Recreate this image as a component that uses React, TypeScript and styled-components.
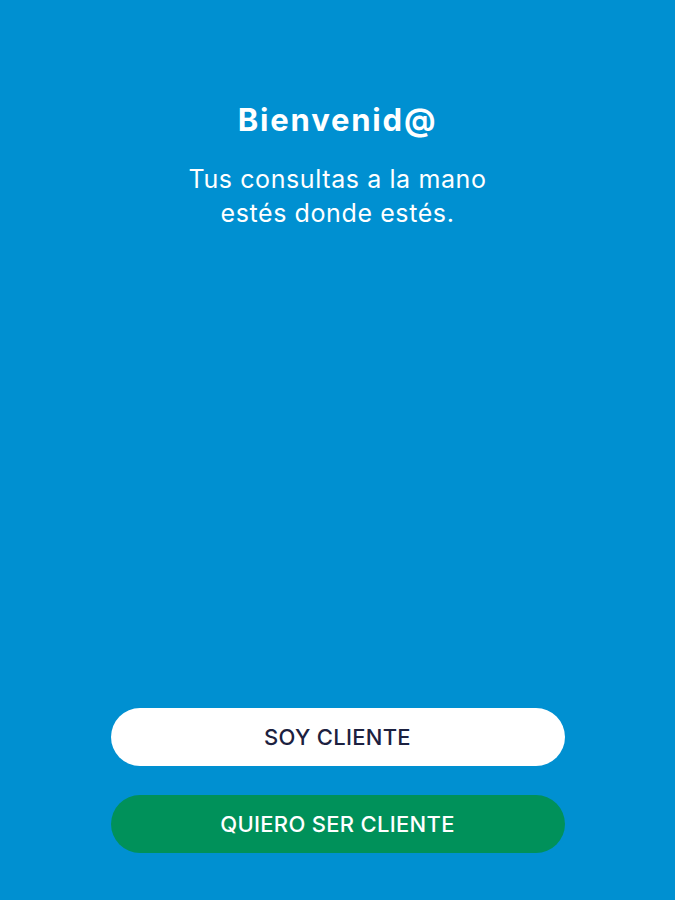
import React from 'react'
import styled, { createGlobalStyle } from 'styled-components'

const GlobalStyle = createGlobalStyle`
  html, body {
    margin: 0;
    padding: 0;
    background-color: #0090d1;
  }
  body {
    font-family: Inter, "Noto Sans", sans-serif;
  }
`

const Screen = styled.div`
  width: 675px;
  height: 900px;
  box-sizing: border-box;
  background-color: #0090d1;
  display: flex;
  flex-direction: column;
  justify-content: space-between;
  align-items: center;
  padding: 101px 0 47px;
`

const Header = styled.div`
  display: flex;
  flex-direction: column;
  align-items: center;
  color: #ffffff;
  text-align: center;
`

const Title = styled.h1`
  margin: 0;
  font-size: 31px;
  font-weight: 700;
  line-height: 38px;
  letter-spacing: 1.8px;
`

const Subtitle = styled.p`
  margin: 23px 0 0;
  font-size: 25px;
  font-weight: 400;
  line-height: 34px;
  letter-spacing: 0.6px;
`

const Actions = styled.div`
  width: 454px;
  display: flex;
  flex-direction: column;
  gap: 29px;
`

const Button = styled.button<{ $variant: 'light' | 'green' }>`
  width: 100%;
  height: 58px;
  border: none;
  border-radius: 29px;
  font-family: Inter, "Noto Sans", sans-serif;
  font-size: 22px;
  font-weight: 500;
  letter-spacing: 0.3px;
  cursor: pointer;
  background-color: ${(p) => (p.$variant === 'light' ? '#ffffff' : '#00915a')};
  color: ${(p) => (p.$variant === 'light' ? '#1c2140' : '#ffffff')};
`

export default function App() {
  return (
    <>
      <GlobalStyle />
      <Screen>
        <Header>
          <Title>Bienvenid@</Title>
          <Subtitle>
            Tus consultas a la mano
            <br />
            estés donde estés.
          </Subtitle>
        </Header>
        <Actions>
          <Button $variant="light">SOY CLIENTE</Button>
          <Button $variant="green">QUIERO SER CLIENTE</Button>
        </Actions>
      </Screen>
    </>
  )
}
